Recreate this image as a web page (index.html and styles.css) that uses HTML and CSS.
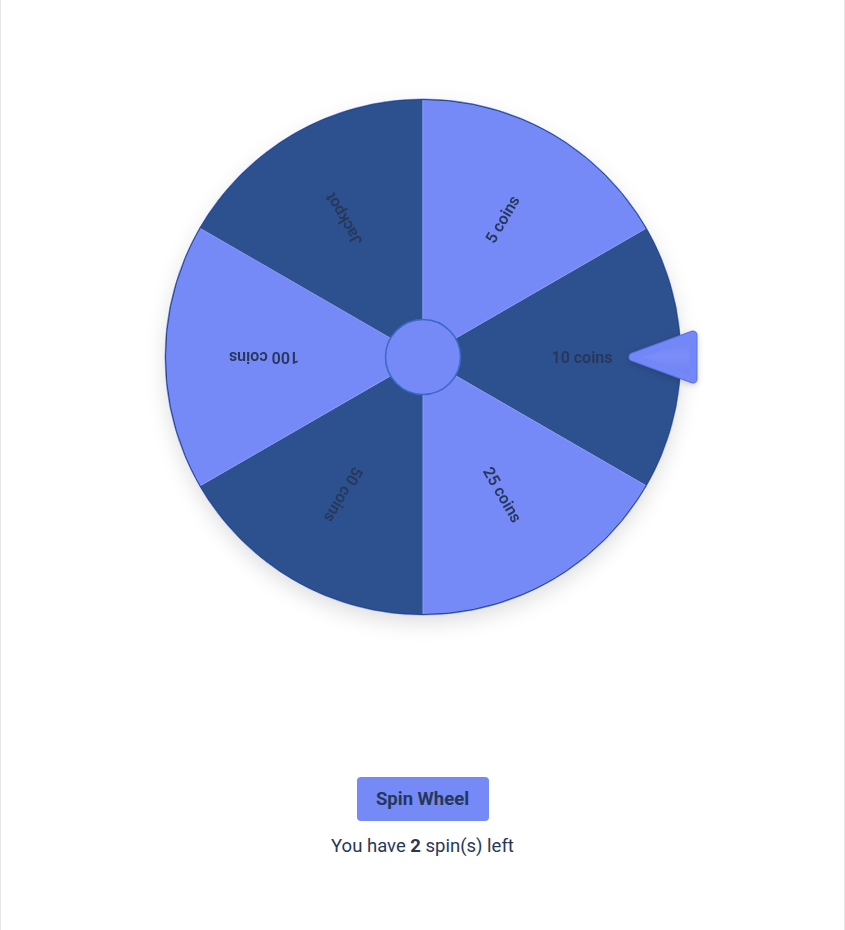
FILE: index.html
```html
<!DOCTYPE html>
<html>
<head>
    <link rel="stylesheet" href="styles.css">
</head>
<body>
    <div class="page">
        <div class="wheel-box">
            <svg class="wheel" width="516" height="516" viewBox="0 0 516 516">
                <g class="slices">
                    <path class="dark" d="M258 258 L481.43 129 A258 258 0 0 1 481.43 387 Z"/>
                    <path class="light" d="M258 258 L481.43 387 A258 258 0 0 1 258 516 Z"/>
                    <path class="dark" d="M258 258 L258 516 A258 258 0 0 1 34.57 387 Z"/>
                    <path class="light" d="M258 258 L34.57 387 A258 258 0 0 1 34.57 129 Z"/>
                    <path class="dark" d="M258 258 L34.57 129 A258 258 0 0 1 258 0 Z"/>
                    <path class="light" d="M258 258 L258 0 A258 258 0 0 1 481.43 129 Z"/>
                </g>
                <circle class="rim" cx="258" cy="258" r="257.5"/>
                <g class="labels">
                    <text x="417" y="258" transform="rotate(0 258 258)">10 coins</text>
                    <text x="417" y="258" transform="rotate(-60 258 258)">5 coins</text>
                    <text x="417" y="258" transform="rotate(-120 258 258)">Jackpot</text>
                    <text x="417" y="258" transform="rotate(180 258 258)">100 coins</text>
                    <text x="417" y="258" transform="rotate(120 258 258)">50 coins</text>
                    <text x="417" y="258" transform="rotate(60 258 258)">25 coins</text>
                </g>
                <circle class="hub" cx="258" cy="258" r="37.5"/>
            </svg>

            <svg class="pointer" width="74" height="56" viewBox="0 0 74 56">
                <defs>
                    <linearGradient id="pointerFill" x1="0" y1="0" x2="0" y2="1">
                        <stop offset="0" stop-color="#6f83f4"/>
                        <stop offset="0.5" stop-color="#7a8df8"/>
                        <stop offset="1" stop-color="#6b80f2"/>
                    </linearGradient>
                </defs>
                <polygon class="pointer-edge" points="7,28 67,6 67,50"/>
                <polygon class="pointer-body" points="7,28 67,6 67,50"/>
            </svg>
        </div>

        <button class="spin-btn">Spin Wheel</button>
        <p class="spins-left">You have <b>2</b> spin(s) left</p>
    </div>
</body>
</html>
```

FILE: styles.css
```css
body {
    margin: 0;
    background: #fff;
    font-family: Roboto, "Liberation Sans", sans-serif;
}
.page {
    box-sizing: border-box;
    width: 845px;
    height: 930px;
    border-left: 1px solid #e6e6e6;
    border-right: 1px solid #e6e6e6;
    padding-top: 99px;
    display: flex;
    flex-direction: column;
    align-items: center;
}
.wheel-box {
    position: relative;
    width: 516px;
    height: 516px;
    margin-left: 1px;
}
.wheel {
    display: block;
    overflow: visible;
    filter: drop-shadow(0 8px 10px rgba(0, 0, 0, 0.12));
}
.slices path {
    stroke: #8797f5;
    stroke-width: 1;
}
.slices .dark {
    fill: #2d518f;
}
.slices .light {
    fill: #7589f7;
}
.rim {
    fill: none;
    stroke: #25447f;
    stroke-width: 1;
}
.labels text {
    font-size: 16px;
    font-weight: 600;
    fill: #27375a;
    text-anchor: middle;
    dominant-baseline: central;
}
.hub {
    fill: #7589f7;
    stroke: #3a68c4;
    stroke-width: 1.5;
}
.pointer {
    position: absolute;
    left: 461px;
    top: 230px;
    overflow: visible;
    filter: drop-shadow(0 2px 3px rgba(0, 0, 0, 0.18));
}
.pointer-edge {
    fill: #5b70e4;
    stroke: #5b70e4;
    stroke-width: 9;
    stroke-linejoin: round;
}
.pointer-body {
    fill: url(#pointerFill);
    stroke: #7487f6;
    stroke-width: 7;
    stroke-linejoin: round;
}
.spin-btn {
    margin-top: 162px;
    width: 132px;
    height: 44px;
    border: none;
    border-radius: 4px;
    background: #7589f7;
    color: #27375a;
    font-family: Roboto, "Liberation Sans", sans-serif;
    font-size: 18.5px;
    font-weight: 700;
    cursor: pointer;
}
.spins-left {
    margin: 12px 0 0;
    color: #27375a;
    font-size: 18.5px;
    line-height: 26px;
}
.spins-left b {
    font-weight: 700;
}
```
